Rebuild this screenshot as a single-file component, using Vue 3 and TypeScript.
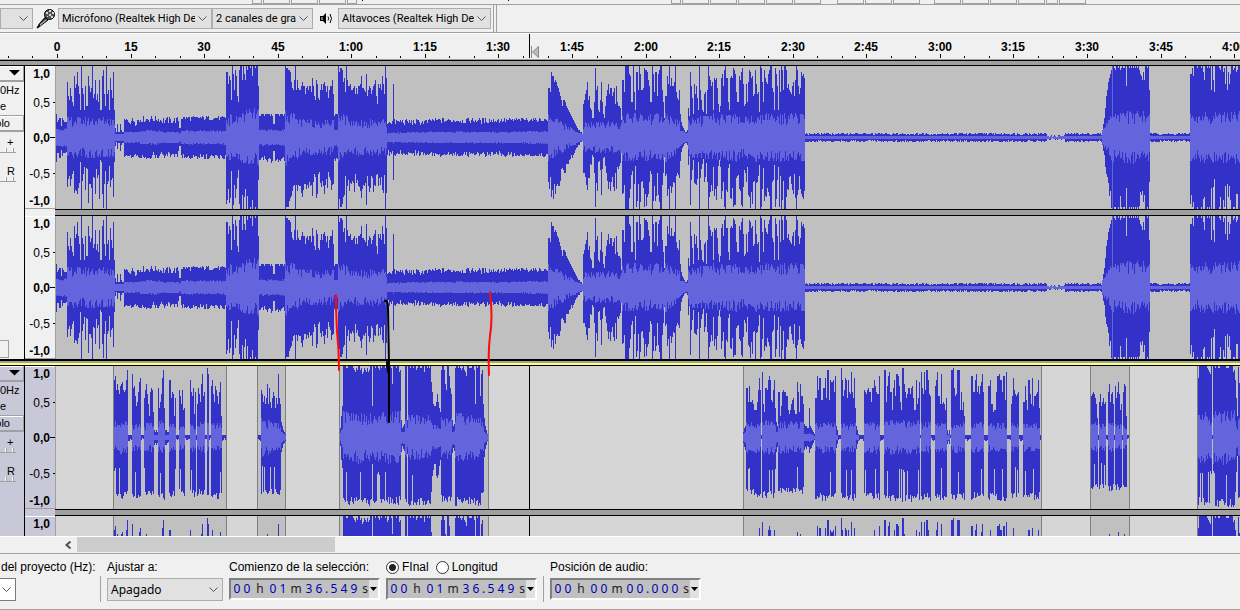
<script setup lang="ts">
type Shape = string | [number, number]
interface Segment {
  from: number
  to: number
  shape: Shape
  rms: [number, number]
  depth?: number
}
interface Clip { from: number; to: number }

const ORIGIN = 56
const MID = 71.5
const LIMIT = 71

const seg = (from: number, to: number, shape: Shape, rmsA: number, rmsB = rmsA, depth?: number): Segment =>
  ({ from, to, shape, rms: [rmsA, rmsB], depth })

/* Peak shapes: one base-36 digit per sample, each step worth two pixels of height. */
const musicTrack: Segment[] = [
  seg(56, 67, 'b7899598777', 8),
  seg(67, 115, 'rkiokhfuoqwpldzoldpffupmozjlsilhsdduxlfzlndtnjwd', 17),
  seg(115, 124, '426226322', 3),
  seg(124, 140, [11, 20], 5),
  seg(140, 160, [14, 21], 6),
  seg(160, 179, [12, 20], 5),
  seg(179, 181, '44', 4),
  seg(181, 226, [16, 21], 6),
  seg(226, 239, 'wwqusizvnxukh', 20, 17),
  seg(239, 259, 'xzzszvszxzzyzuzzyzzp', 22, 25),
  seg(259, 285, 'aabbbabbbbbaba6bbbbbabbbab', 7),
  seg(285, 300, 'zyyxxwronsznson', 25, 16),
  seg(300, 334, 'nprpplopnppmtpkisqjinqnqrpmpjnppslz', 15),
  seg(334, 338, 'abbb', 7, 9),
  seg(338, 348, 'zwyyxrtmzs', 23, 18),
  seg(348, 387, 'pqnnoplolppquoonmvknpolnpqskgqoqnuqlzt', 15),
  seg(387, 393, [11, 18], 4),
  seg(393, 394, 'q', 6, 6, 43),
  seg(394, 430, [11, 18], 4, 5),
  seg(430, 515, [13, 19], 5),
  seg(515, 548, [15, 19], 5, 6),
  seg(548, 583, 'omwuursrpomkifiihfedcba98765433221', 20, 2),
  seg(583, 622, 'gilnriked99hynpdcirhb9fknqlookmogphffe89', 13),
  seg(622, 665, 'smzzzvuhzmdwnzvnoyxwsphzvmwkvxznh9', 20),
  seg(665, 680, 'kuqzptpprzmjin', 21, 13),
  seg(680, 688, 'b75432234', 7, 3),
  seg(688, 712, 'eawpjbqlpjdznidclmbnzuspo', 18),
  seg(712, 738, 'rdtstogcftvpxztohdtutyxvmh', 20),
  seg(738, 755, 'huswyqfgqnhrxwtuklv', 18),
  seg(755, 784, 'xqlmczyrhxtrqvxzzomdyvpdxmzxni', 20),
  seg(784, 805, 'zxoqnmlprkszxplowuvt', 20),
  seg(805, 1047, [2, 4], 1),
  seg(1047, 1065, [0, 2], 1),
  seg(1065, 1102, [2, 4], 1),
  seg(1102, 1113, '369eknrtvxy', 6, 22),
  seg(1113, 1150, 'zyxzzyzxyzyyzpzzyzyzyzyzyzxvuswszzyzn', 22),
  seg(1150, 1190, [2, 4], 1),
  seg(1190, 1240, 'vyuzzzyzzzyzwszzyzyznzsmzzzyxzzwyqznwqvzzxyzwxzz', 20, 22),
  seg(1240, 1480, [60, 71], 20),
]

const voiceTrack: Segment[] = [
  seg(114, 128, 'sunqnlpqrnmnsx', 14, 14, 61),
  seg(132, 141, 'vopkfhmrt', 12, 12, 62),
  seg(144, 154, 'jnqlgamonc', 12, 12, 58),
  seg(154, 158, '3232', 2),
  seg(158, 165, 'oehltxe', 14, 14, 63),
  seg(165, 169, '3322', 2),
  seg(169, 176, 'ssjmlaj', 12, 12, 60),
  seg(179, 185, 'nkgnde', 11, 11, 58),
  seg(190, 196, 'smkobm', 12, 12, 59),
  seg(197, 205, 'golhqvkm', 13, 13, 58),
  seg(207, 209, 'yv', 14, 14, 60),
  seg(211, 222, 'pslhpnkgmra', 12, 12, 62),
  seg(261, 281, 'nlhkgjqgohejmkejgvjg', 16, 12, 58),
  seg(281, 286, '75321', 5, 1),
  seg(340, 343, '4af', 4, 13),
  seg(343, 372, 'zzzyyzzzzzyxwyxzzxyvwyxwywxzz', 23, 20, 68),
  seg(372, 373, 'f', 12),
  seg(373, 401, 'zzyzzyxzyzzzyzwxzzyqzzzyzzwxz', 20, 23, 67),
  seg(401, 405, '8456', 5),
  seg(405, 407, 'zz', 18, 18, 66),
  seg(407, 408, '8', 8),
  seg(408, 431, 'zzyzzyzzxyzzyzzzwzzyzyz', 19, 19, 68),
  seg(431, 441, 'rmgffhlhec', 12, 8),
  seg(441, 452, 'xzzxqnzzuol', 18, 18, 65),
  seg(452, 455, '856', 6),
  seg(455, 481, 'yzzyzyxyzxwuzzyzyzzxgzyzzk', 21, 18, 68),
  seg(481, 484, 'vxg', 15, 12, 60),
  seg(484, 488, '9531', 5, 1),
  seg(743, 746, '245', 3, 6),
  seg(746, 761, 'ohphhigdddhntn', 13, 13, 59),
  seg(762, 776, 'wgcoonsusihnsej', 14, 14, 61),
  seg(776, 778, '75', 5),
  seg(778, 804, 'mafmnmmkdbdgijdbrmcqkkg', 13, 13, 56),
  seg(804, 809, '65544', 3),
  seg(809, 810, 'e', 4, 4, 15),
  seg(810, 815, '54321', 3, 1),
  seg(815, 836, 'juntiiotjxisrsmu', 13, 13, 63),
  seg(836, 838, '53', 2),
  seg(841, 856, 'yskntsjsmlwmjte', 12, 12, 63),
  seg(856, 859, '531', 2),
  seg(864, 880, 'nmlnommhoospmllu', 13, 13, 62),
  seg(884, 920, 'xhpuwmdoskvuphdyqmjlolopjdsgjr', 14, 14, 64),
  seg(921, 931, 'wolwnxxslk', 13, 13, 63),
  seg(935, 947, 'pswkkgvghgdj', 12, 12, 62),
  seg(947, 950, '313', 2),
  seg(951, 965, 'xyoklxxdmdha', 13, 13, 63),
  seg(971, 984, 'ummsvmplprvm', 13, 13, 62),
  seg(988, 1007, 'psgcdmuvsmuiw', 12, 12, 63),
  seg(1011, 1019, 'gktnlklm', 12, 12, 60),
  seg(1023, 1040, 'hpidslgtfklmse', 12, 12, 62),
  seg(1091, 1098, 'klmljg9', 13, 13, 52),
  seg(1099, 1106, 'hlfhjgh', 11, 11, 52),
  seg(1108, 1114, 'mqhlmg', 12, 12, 53),
  seg(1115, 1122, 'pjmrldg', 12, 12, 53),
  seg(1123, 1127, 'mqpa', 10, 7, 50),
  seg(1198, 1212, 'tzzzzzzzzyxwvz', 22, 20, 68),
  seg(1213, 1235, 'zzyzzyyzzzzzzyyzzzzzwx', 22, 23, 69),
  seg(1235, 1238, 'sja', 16, 6),
  seg(1238, 1480, [50, 71], 16),
]

const voiceClips: Clip[] = [
  { from: 113, to: 226 }, { from: 257, to: 285 }, { from: 339, to: 488 },
  { from: 743, to: 1041 }, { from: 1090, to: 1129 }, { from: 1197, to: 1480 },
]

const hash = (n: number, salt: number): number => {
  const v = Math.sin(n * 12.9898 + salt * 78.233) * 43758.5453
  return v - Math.floor(v)
}

const bar = (x: number, up: number, down: number): string =>
  `M${x} ${MID - Math.round(up) - 0.5}h1V${MID + Math.round(down) + 0.5}h-1z`

function draw(segments: Segment[], clips: Clip[]) {
  let peak = ''
  let rms = ''
  for (const clip of clips) {
    for (let x = clip.from + 1; x < clip.to; x++) peak += bar(x - ORIGIN, 2, hash(x, 9) * 3)
  }
  for (const s of segments) {
    const span = s.to - s.from
    for (let x = s.from; x < s.to; x++) {
      const t = (x - s.from) / span
      let up: number
      let down: number
      if (typeof s.shape === 'string') {
        up = parseInt(s.shape[Math.floor(t * s.shape.length)], 36) * 2 + 1
        down = up >= 69 ? up : up * (0.82 + hash(x, 2) * 0.26)
      } else {
        const [lo, hi] = s.shape
        up = lo + hash(x, 1) ** 0.7 * (hi - lo)
        down = lo + hash(x, 3) ** 0.7 * (hi - lo)
      }
      if (s.depth) {
        const notch = hash(x, 7) > 0.88 ? 0.55 : 1
        down = s.depth * (0.87 + hash(x, 4) * 0.13) * notch
      }
      up = Math.min(up, LIMIT)
      down = Math.min(down, LIMIT)
      const level = s.rms[0] + (s.rms[1] - s.rms[0]) * t
      const spread = level > 9 ? 0.5 : level > 3 ? 0.25 : 0
      const sway = 1.05 - spread
      peak += bar(x - ORIGIN, up, down)
      rms += bar(
        x - ORIGIN,
        Math.min(level * (sway + hash(x, 5) ** 0.7 * spread * 1.3), up),
        Math.min(level * (sway + hash(x, 6) ** 0.7 * spread * 1.3), down),
      )
    }
  }
  return { peak, rms }
}

const music = draw(musicTrack, [])
const voice = draw(voiceTrack, voiceClips)

const tracks = [
  { id: 'music', selected: false, wave: music, clips: [] as Clip[] },
  { id: 'voice', selected: true, wave: voice, clips: voiceClips },
]

const stamp = (s: number): string =>
  s < 60 ? String(s) : `${Math.floor(s / 60)}:${String(s % 60).padStart(2, '0')}`
const ticks = Array.from({ length: 120 }, (_, i) => {
  const s = (i - 2) * 5
  const major = s >= 0 && s % 15 === 0
  return { x: Math.round(57 + s * 4.905), major, label: major ? stamp(s) : '' }
}).filter((t) => t.x < window.innerWidth)

const levels = [
  { text: '1,0', y: 12, bold: true, tick: 0, ty: 0 },
  { text: '0,5', y: 41, bold: false, tick: 2, ty: 36 },
  { text: '0,0', y: 76, bold: true, tick: 5, ty: 71 },
  { text: '-0,5', y: 112, bold: false, tick: 2, ty: 107 },
  { text: '-1,0', y: 139, bold: true, tick: 0, ty: 142 },
]

const stubsLeft = [10, 27, 27, 27, 10]
const stubsRight = [10, 27, 27, 27, 27, 27]
const stubsFar = [27, 27, 27]
const stubsEnd = [27, 27, 27, 27, 12, 27]
</script>

<template>
  <main class="app">
    <div class="edit-bar" aria-hidden="true">
      <span class="stubs first"><i v-for="(w, i) in stubsLeft" :key="i" :style="{ width: w + 'px' }"></i></span>
      <span class="dot one"></span>
      <span class="dot two"></span>
      <span class="stubs second"><i v-for="(w, i) in stubsRight" :key="i" :style="{ width: w + 'px' }"></i></span>
      <span class="stubs third"><i v-for="(w, i) in stubsFar" :key="i" :style="{ width: w + 'px' }"></i></span>
      <span class="stubs fourth"><i v-for="(w, i) in stubsEnd" :key="i" :style="{ width: w + 'px' }"></i></span>
    </div>

    <header class="device-bar">
      <span class="combo host">
        <select aria-label="Sistema de audio"><option></option></select>
        <svg class="chev" width="9" height="6"><path d="M.5.5l4 4 4-4" /></svg>
      </span>
      <svg class="mic" width="20" height="21" viewBox="0 0 20 21">
        <path d="M1 20l2-1 9-7-2.500-3L3.500 15.500z" fill="#222" stroke="#000" />
        <path d="M4 16l6-5 1 1-7 6z" fill="#aaa" />
        <circle cx="13.500" cy="6.500" r="5" fill="#555" stroke="#000" />
        <path d="M10 4h2v2h-2zM13 2h2v2h-2zM13 6h2v2h-2zM16 4h2v2h-2zM15 8h2v2h-2zM11 8h1v1h-1z" fill="#d8d8d8" />
      </svg>
      <span class="combo input">
        <select aria-label="Dispositivo de grabación"><option>Micrófono (Realtek High De</option></select>
        <svg class="chev" width="9" height="6"><path d="M.5.5l4 4 4-4" /></svg>
      </span>
      <span class="combo chans">
        <select aria-label="Canales de grabación"><option>2 canales de gra</option></select>
        <svg class="chev" width="9" height="6"><path d="M.5.5l4 4 4-4" /></svg>
      </span>
      <svg class="speaker" width="14" height="13" viewBox="0 0 14 13">
        <path d="M1 4h3l3-3v11L4 9H1z" fill="#000" />
        <path d="M2 5h2v3H2z" fill="#777" />
        <path d="M9 4.500q1.500 2 0 4M11 2q3 4.500 0 9" fill="none" stroke="#000" />
      </svg>
      <span class="combo output">
        <select aria-label="Dispositivo de reproducción"><option>Altavoces (Realtek High De</option></select>
        <svg class="chev" width="9" height="6"><path d="M.5.5l4 4 4-4" /></svg>
      </span>
      <span class="grip"></span>
    </header>

    <svg class="timeline" height="26" role="img" aria-label="Línea de tiempo">
      <g v-for="t in ticks" :key="t.x">
        <rect :x="t.x" :y="t.major ? 20 : 22" width="1" :height="t.major ? 4 : 2" />
        <text v-if="t.label" :x="t.x" y="17">{{ t.label }}</text>
      </g>
      <rect x="529" y="0" width="1" height="24" />
      <path class="pin" d="M531.500 12v12M538.500 12.500v11l-6-5.500z" />
    </svg>

    <section class="tracks">
      <div class="top-edge"></div>
      <template v-for="(track, ti) in tracks" :key="track.id">
        <div v-if="ti" class="between"></div>
        <article class="track" :class="{ selected: track.selected }">
          <aside class="panel">
            <button class="menu" aria-label="Menú de pista">
              <svg width="11" height="6"><path d="M0 0h11L5.500 5.500z" /></svg>
            </button>
            <p>0Hz</p>
            <p>e</p>
            <button class="solo">olo</button>
            <label class="gain"><span>+</span><input type="range" aria-label="Ganancia" /></label>
            <label class="pan"><span>R</span><input type="range" aria-label="Balance" /></label>
            <button v-if="!track.selected" class="collapse" aria-label="Contraer pista"></button>
          </aside>
          <div class="channels">
            <div v-for="ch in 2" :key="ch" class="channel">
              <svg class="scale" width="30" height="143">
                <g v-for="l in levels" :key="l.text">
                  <text x="25" :y="l.y" :class="{ bold: l.bold }">{{ l.text }}</text>
                  <rect v-if="l.tick" :x="30 - l.tick" :y="l.ty" :width="l.tick" height="1" />
                </g>
              </svg>
              <svg class="wave" height="143" role="img" :aria-label="'Canal ' + ch">
                <g v-for="c in track.clips" :key="c.from">
                  <rect class="clip" :x="c.from - ORIGIN" y="0" :width="c.to - c.from + 1" height="143" />
                  <path class="edge" :d="`M${c.from - ORIGIN} 0h1v143h-1zM${c.to - ORIGIN} 0h1v143h-1z`" />
                </g>
                <path class="peak" :d="track.wave.peak" />
                <path class="rms" :d="track.wave.rms" />
                <rect v-if="!track.selected" class="rms" x="1056" y="0" width="1" height="143" />
                <rect v-if="track.selected" x="473" y="0" width="1" height="143" />
              </svg>
            </div>
          </div>
        </article>
      </template>
      <svg class="marks" aria-hidden="true">
        <g class="red">
          <path d="M336 235q0 18 1 37q2 18 2 38" />
          <path d="M490 232q3 26 0 44q-2 16-1 39" />
        </g>
        <path class="black" d="M385 241q3-1 3 7l1 56v58M387 302q0 8 2 12" />
      </svg>
    </section>

    <div class="scrollbar">
      <button aria-label="Desplazar a la izquierda"><svg width="7" height="8"><path d="M5.500.5l-4 3.500 4 3.500" /></svg></button>
      <div class="thumb"></div>
    </div>

    <footer class="selection-bar">
      <div class="group rate">
        <label for="rate">del proyecto (Hz):</label>
        <span class="combo">
          <select id="rate"><option></option></select>
          <svg class="chev" width="9" height="6"><path d="M.5.5l4 4 4-4" /></svg>
        </span>
      </div>
      <span class="rule"></span>
      <div class="group snap">
        <label for="snap">Ajustar a:</label>
        <span class="combo">
          <select id="snap"><option>Apagado</option></select>
          <svg class="chev" width="9" height="6"><path d="M.5.5l4 4 4-4" /></svg>
        </span>
      </div>
      <div class="group start">
        <span id="start-label" class="label">Comienzo de la selección:</span>
        <div class="time" role="group" aria-labelledby="start-label">
          <span v-for="(c, i) in '00h01m36.549s'" :key="i" :class="{ unit: /[hms]/.test(c), point: c === '.' }">{{ c }}</span>
          <button aria-label="Formato"><svg width="7" height="4"><path d="M0 0h7L3.500 4z" /></svg></button>
        </div>
      </div>
      <div class="group end">
        <div class="radios">
          <label><input type="radio" name="mode" checked />FInal</label>
          <label><input type="radio" name="mode" />Longitud</label>
        </div>
        <div class="time" role="group" aria-label="Final de la selección">
          <span v-for="(c, i) in '00h01m36.549s'" :key="i" :class="{ unit: /[hms]/.test(c), point: c === '.' }">{{ c }}</span>
          <button aria-label="Formato"><svg width="7" height="4"><path d="M0 0h7L3.500 4z" /></svg></button>
        </div>
      </div>
      <span class="rule"></span>
      <div class="group audio">
        <span id="pos-label" class="label">Posición de audio:</span>
        <div class="time" role="group" aria-labelledby="pos-label">
          <span v-for="(c, i) in '00h00m00.000s'" :key="i" :class="{ unit: /[hms]/.test(c), point: c === '.' }">{{ c }}</span>
          <button aria-label="Formato"><svg width="7" height="4"><path d="M0 0h7L3.500 4z" /></svg></button>
        </div>
      </div>
    </footer>
  </main>
</template>

<style>
body { background: #f0f0f0; }
</style>

<style scoped>
* { box-sizing: border-box; }
.app { font: 12px/16px "Liberation Sans", sans-serif; color: #000; background: #f0f0f0; overflow: hidden; }
svg { display: block; flex: none; }
button, select, input { margin: 0; padding: 0; border: 0; border-radius: 0; font: inherit; color: inherit; background: none; }
p { margin: 0; }

.edit-bar { display: flex; height: 5px; border-bottom: 1px solid #a0a0a0; }
.stubs { display: flex; gap: 1px; height: 4px; }
.stubs i { flex: none; border: solid #a0a0a0; border-width: 0 1px 1px; }
.first { margin-left: 252px; }
.dot { width: 1px; height: 1px; background: #000; }
.one { margin-left: 5px; }
.two { margin-left: 145px; }
.second { margin-left: 162px; }
.third { margin-left: 16px; }
.fourth { margin-left: 14px; }

.device-bar { display: flex; align-items: center; height: 28px; border-bottom: 1px solid #a0a0a0; }
.combo { display: grid; height: 21px; background: #e1e1e1; border: 1px solid #adadad; align-items: center; }
.combo select { grid-area: 1 / 1; width: 100%; height: 100%; padding: 0 16px 0 3px; appearance: none; font: 11px/17px Roboto, sans-serif; outline: 0; }
.chev { grid-area: 1 / 1; justify-self: end; margin-right: 4px; fill: none; stroke: #555; pointer-events: none; }
.host { width: 33px; }
.mic { margin: 0 2px 0 3px; }
.input { width: 154px; }
.chans { width: 101px; }
.speaker { margin: 0 5px 0 6px; }
.output { width: 153px; }
.grip { align-self: stretch; width: 4px; margin-left: 2px; border: solid #a0a0a0; border-width: 0 1px; }

.timeline { width: 100%; margin-top: 1px; background: #f0f0f0; border-bottom: 1px solid #a0a0a0; box-shadow: 0 -1px #fff; shape-rendering: crispEdges; }
.timeline text { font-weight: bold; text-anchor: middle; }
.pin { fill: #bbb; stroke: #888; shape-rendering: auto; }

.tracks { position: relative; height: 476px; overflow: hidden; }
.top-edge { height: 6px; background: #a0a0a0; border: solid #000; border-width: 1px 0; }
.between { height: 7px; background: linear-gradient(#000 2px, #a0a0a0 2px 4px, #ffff80 4px 6px, #000 6px); }
.track { display: flex; }
.panel { width: 25px; flex: none; border-right: 1px solid #000; font-size: 11px; position: relative; }
.selected .panel, .selected .scale { background: #c8c8d8; }
.menu { display: flex; justify-content: end; width: 24px; height: 16px; padding: 4px 3px 0 0; border: solid #a0a0a0; border-width: 0 1px 2px 0; box-shadow: inset 0 1px #fff; }
.panel p { height: 16px; line-height: 16px; }
.solo { display: block; width: 24px; height: 17px; margin-top: 1px; padding-right: 13px; border: solid #a0a0a0; border-width: 1px 1px 2px 0; line-height: 14px; text-align: right; box-shadow: inset 0 1px #fff; direction: rtl; }
.gain, .pan { display: block; width: 16px; height: 21px; }
.gain { margin-bottom: 8px; }
.gain span, .pan span { display: block; height: 16px; padding-left: 7px; line-height: 20px; }
.panel input { display: block; width: 16px; height: 5px; appearance: none; border-bottom: 1px solid #a0a0a0; background: linear-gradient(90deg, transparent 5px, #fff 5px 6px, #a0a0a0 6px 7px, transparent 7px 12px, #fff 12px 13px, #a0a0a0 13px 14px, transparent 14px); }
.panel input::-webkit-slider-thumb { appearance: none; width: 0; }
.collapse { position: absolute; left: 0; bottom: 1px; width: 9px; height: 18px; border: 1px solid #a0a0a0; border-left: 0; }

.channels { flex: 1; min-width: 0; }
.channel { display: flex; background: #f0f0f0; }
.selected .channel { background: #c8c8d8; }
.channel + .channel { padding-top: 7px; background-image: linear-gradient(#000 1px, #a0a0a0 1px 6px, #000 6px 7px, transparent 7px); background-position: 30px 0; background-repeat: no-repeat; }
.scale { border: solid #a0a0a0; border-width: 0 0 1px; box-shadow: inset 0 1px #fff; shape-rendering: crispEdges; }
.scale text { text-anchor: end; font-size: 12px; }
.scale .bold { font-weight: bold; }
.wave { flex: 1; width: 0; min-width: 0; background: #c0c0c0; border-left: 1px solid #a0a0a0; shape-rendering: crispEdges; }
.selected .wave { background: #d6d6d6; }
.clip { fill: #c0c0c0; }
.edge { fill: #808080; }
.peak { fill: #3232c8; }
.rms { fill: #6464dc; }
.marks { position: absolute; inset: 0; width: 100%; height: 100%; fill: none; stroke-width: 2; stroke-linecap: round; pointer-events: none; }
.red { stroke: #ff0a0a; }
.black { stroke: #000; }

.scrollbar { display: flex; height: 18px; padding-left: 60px; border-top: 1px solid #fff; border-bottom: 1px solid #a0a0a0; }
.scrollbar button { width: 17px; display: grid; place-items: center; }
.scrollbar path { fill: none; stroke: #505050; stroke-width: 2; }
.thumb { width: 258px; height: 15px; background: #cdcdcd; }

.selection-bar { display: flex; height: 56px; padding-top: 5px; border-bottom: 1px solid #a0a0a0; }
.group { display: flex; flex-direction: column; gap: 3px; white-space: nowrap; }
.group > label, .label, .radios { height: 16px; }
.rule { width: 1px; height: 26px; margin-top: 17px; background: #a0a0a0; }
.group .combo { height: 23px; }
.group .combo select { font: 12px/19px "Noto Sans", sans-serif; }
.rate { width: 100px; padding-left: 1px; }
.rate .combo { width: 16px; margin-left: -1px; background: #fff; border-left: 0; border-color: #7a7a7a; }
.rate .combo select { padding: 0; }
.snap { width: 116px; margin-left: 6px; }
.start { width: 151px; margin-left: 6px; }
.end { width: 151px; margin-left: 6px; }
.end + .rule { margin-left: 6px; }
.audio { width: 151px; margin-left: 6px; }
.time { display: flex; height: 22px; padding-left: 1px; background: #c0c0c0; border: 2px solid; border-color: #808080 #fff #fff #808080; color: #0000b4; font: 12px/18px "Noto Sans", sans-serif; }
.time span { width: 10px; text-align: center; }
.time .unit { width: 16px; color: #222; }
.time .point { width: 5px; text-align: center; }
.time .unit:nth-of-type(13) { width: 9px; text-align: right; }
.time button { width: 9px; height: 18px; margin-left: auto; background: #e1e1e1; display: grid; place-items: center; }
.radios { display: flex; gap: 7px; }
.radios label { display: flex; align-items: center; gap: 3px; }
.radios input { width: 13px; height: 13px; appearance: none; border: 1px solid #333; border-radius: 50%; background: #fff; }
.radios input:checked { background: radial-gradient(#222 3px, #fff 4px); }
</style>
